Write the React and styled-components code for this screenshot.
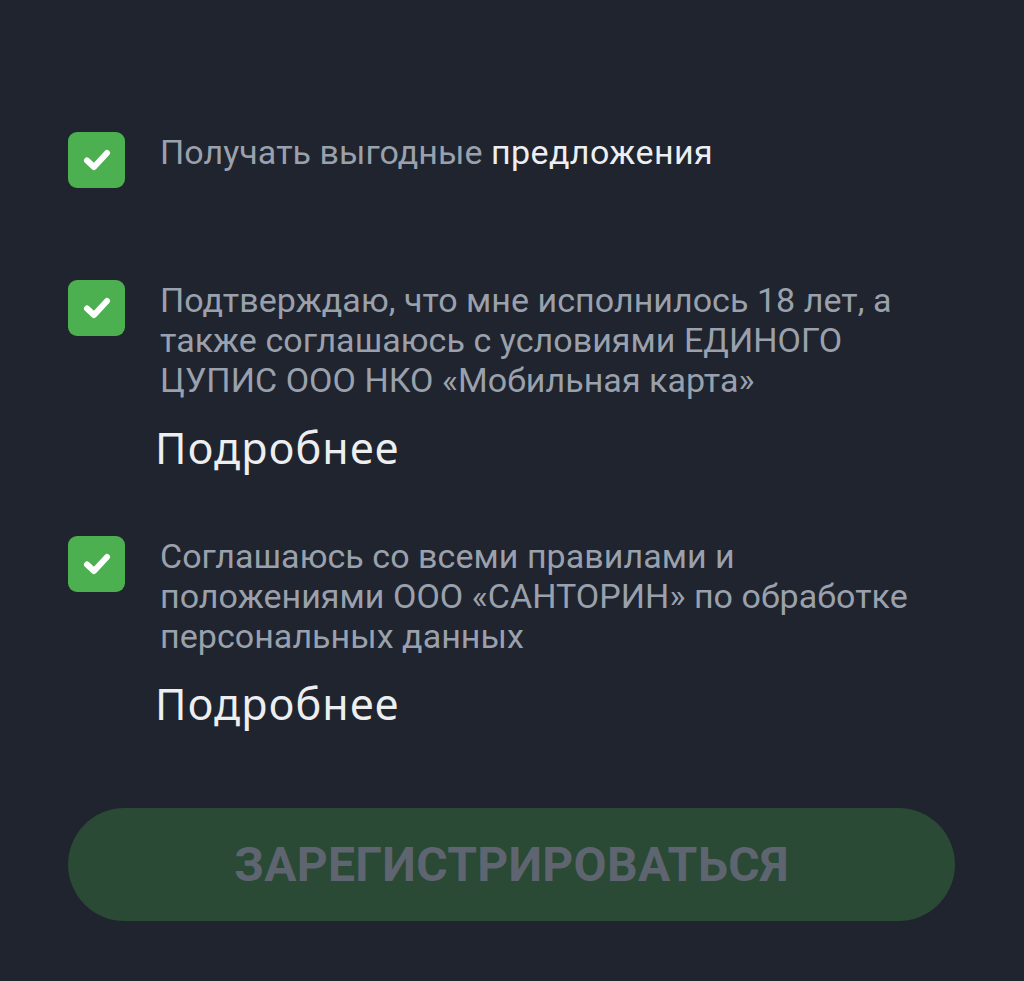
import React from "react";
import styled, { createGlobalStyle } from "styled-components";

const Global = createGlobalStyle`
  html, body { margin: 0; padding: 0; background: #1f242e; }
  body { font-family: Roboto, "Noto Sans", sans-serif; }
`;

const Page = styled.div`
  min-height: 981px;
  box-sizing: border-box;
  padding: 132px 69px 0 68px;
  display: flex;
  flex-direction: column;
`;

const Row = styled.div`
  display: flex;
  align-items: flex-start;
  gap: 35px;
  margin-bottom: ${(p) => p.$mb}px;
`;

const Box = styled.div`
  flex: 0 0 auto;
  width: 57px;
  height: 56px;
  border-radius: 9px;
  background: #4caf50;
  display: flex;
  align-items: center;
  justify-content: center;
`;

const Body = styled.div`
  display: flex;
  flex-direction: column;
  margin-top: ${(p) => p.$mt || 0}px;
`;

const Text = styled.div`
  font-family: Roboto, sans-serif;
  font-size: 34px;
  line-height: 40px;
  letter-spacing: 0.05px;
  color: #9aa1ad;
  white-space: nowrap;
`;

const Strong = styled.span`
  color: #eceef2;
  letter-spacing: 0.4px;
`;

const More = styled.div`
  font-family: "Noto Sans", sans-serif;
  font-size: 43px;
  line-height: 50px;
  letter-spacing: 1.2px;
  color: #eceef0;
  margin-top: 23px;
  margin-left: -5px;
`;

const Button = styled.button`
  width: 887px;
  height: 113px;
  border: none;
  border-radius: 57px;
  background: #2a4a35;
  color: #5e6570;
  font-family: Roboto, sans-serif;
  font-weight: 700;
  font-size: 48px;
  letter-spacing: 0.3px;
  display: flex;
  align-items: center;
  justify-content: center;
  padding: 0;
`;

const Check = () => (
  <svg width="30" height="26" viewBox="0 0 30 26">
    <path d="M5 13.5 L12 20 L25 6" fill="none" stroke="#fff" strokeWidth="6" strokeLinecap="round" strokeLinejoin="round" />
  </svg>
);

export default function App() {
  return (
    <>
      <Global />
      <Page>
        <Row $mb={92}>
          <Box><Check /></Box>
          <Body $mt={0}>
            <Text>Получать выгодные <Strong>предложения</Strong></Text>
          </Body>
        </Row>
        <Row $mb={63}>
          <Box><Check /></Box>
          <Body $mt={0}>
            <Text>
              Подтверждаю, что мне исполнилось 18 лет, а<br />
              также соглашаюсь с условиями ЕДИНОГО<br />
              ЦУПИС ООО НКО «Мобильная карта»
            </Text>
            <More>Подробнее</More>
          </Body>
        </Row>
        <Row $mb={79}>
          <Box><Check /></Box>
          <Body $mt={0}>
            <Text>
              Соглашаюсь со всеми правилами и<br />
              положениями ООО «САНТОРИН» по обработке<br />
              персональных данных
            </Text>
            <More>Подробнее</More>
          </Body>
        </Row>
        <Button>ЗАРЕГИСТРИРОВАТЬСЯ</Button>
      </Page>
    </>
  );
}
